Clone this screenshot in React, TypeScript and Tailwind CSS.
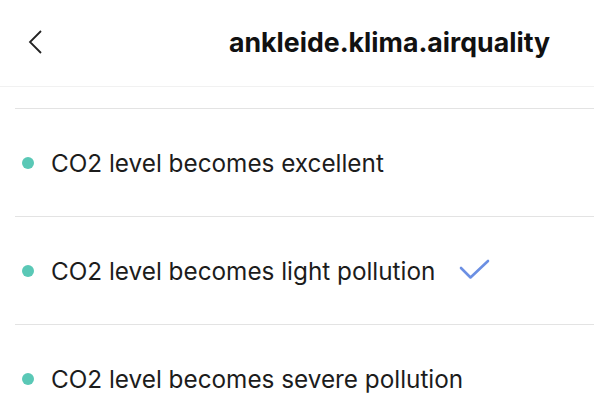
import React from 'react'

const rows = [
  { label: 'CO2 level becomes excellent', checked: false },
  { label: 'CO2 level becomes light pollution', checked: true },
  { label: 'CO2 level becomes severe pollution', checked: false },
]

function Chevron() {
  return (
    <svg width="16" height="26" viewBox="0 0 16 26" fill="none" stroke="#222" strokeWidth="1.8">
      <path d="M14 2L3 13l11 11" />
    </svg>
  )
}

function Check() {
  return (
    <svg width="31" height="21" viewBox="0 0 31 21" fill="none" stroke="#6b8fe3" strokeWidth="2.6" strokeLinecap="round" strokeLinejoin="round">
      <path d="M2 9l9.5 9.5L29 2" />
    </svg>
  )
}

export default function App() {
  return (
    <div className="h-[412px] w-[594px] overflow-hidden bg-white font-['Inter','Liberation_Sans',sans-serif]">
      <div className="flex h-[87px] items-center border-b border-[#f1f1f1]">
        <div className="ml-[27px] mt-[-2px] flex w-[16px]">
          <Chevron />
        </div>
        <div className="ml-[186px] mt-[-2px] text-[26.7px] font-bold text-[#111]">
          ankleide.klima.airquality
        </div>
      </div>
      <div className="ml-[15px] h-[22px] border-b border-[#e3e3e3]" />
      {rows.map((r) => (
        <div key={r.label} className="ml-[15px] flex h-[108px] items-center border-b border-[#e3e3e3]">
          <span className="ml-[7px] h-[12px] w-[12px] shrink-0 rounded-full bg-[#5ac8b6]" />
          <span className="ml-[17px] mt-[2px] text-[24.3px] text-[#1c1c1c]">{r.label}</span>
          {r.checked && (
            <span className="ml-[24px] mt-[-2px] flex">
              <Check />
            </span>
          )}
        </div>
      ))}
    </div>
  )
}
